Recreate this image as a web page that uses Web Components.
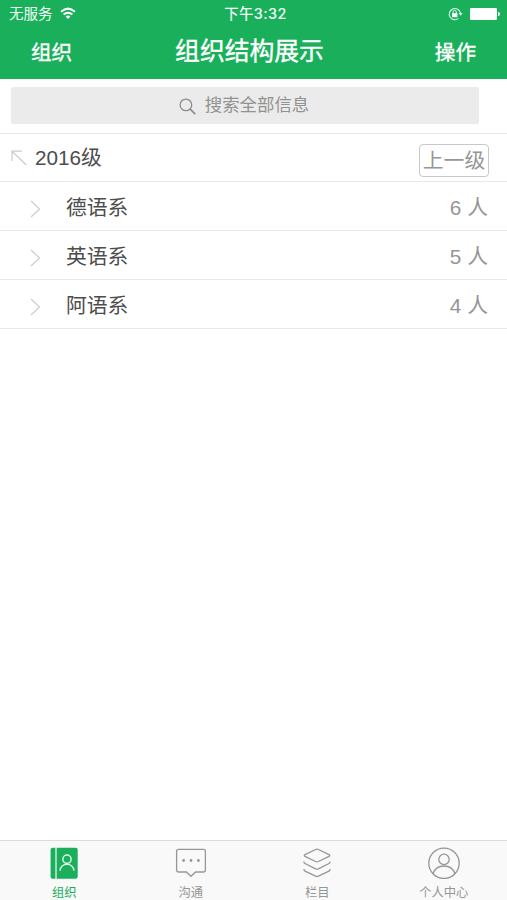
<!doctype html>
<html lang="zh-CN">
<head>
    <title>组织结构展示</title>
    <meta charset="utf-8">
    <style>
        body {
            margin: 0;
            background: #fff;
            font-family: "Liberation Sans", "Noto Sans CJK SC", sans-serif;
        }
    </style>
</head>
<body>
    <template id="screen-tpl">
        <style>
            :host {
                display: flex;
                flex-direction: column;
                height: 900px;
                width: 507px;
                overflow: hidden;
            }
            main {
                flex: 1;
            }
        </style>
        <slot name="top"></slot>
        <main><slot></slot></main>
        <slot name="bottom"></slot>
    </template>

    <template id="status-tpl">
        <style>
            :host {
                display: grid;
                grid-template-columns: 1fr auto 1fr;
                align-items: center;
                box-sizing: border-box;
                height: 27px;
                padding: 0 7px 0 9px;
                background: #19af5b;
                color: #f2fff6;
                font: 14.5px/27px Inter, "Noto Sans CJK SC", sans-serif;
            }
            .left, .right {
                display: flex;
                align-items: center;
            }
            .left {
                gap: 7px;
            }
            .right {
                justify-content: flex-end;
                gap: 7px;
            }
            .time {
                margin-left: 2px;
                font-size: 14.4px;
                font-weight: 500;
                letter-spacing: 0.4px;
            }
            svg {
                display: block;
            }
        </style>
        <span class="left">
            <slot name="carrier"></slot>
            <svg width="16" height="13" viewBox="0 0 16 13" fill="none" stroke="#fff" stroke-width="2">
                <path d="M1 4.8Q8-1.6 15 4.8M3.6 7.6Q8 3.8 12.4 7.6"/>
                <path d="M5.6 9.4Q8 7.4 10.4 9.4L8 12Z" fill="#fff" stroke="none"/>
            </svg>
        </span>
        <span class="time"><slot></slot></span>
        <span class="right">
            <svg width="15" height="14" viewBox="0 0 15 14" fill="none" stroke="#dff5e7">
                <path d="M10.5 11.4A5.6 5.6 0 1 1 12.4 6.2" stroke-width="1.1"/>
                <path d="M10.6 6h4L12.6 8.8Z" fill="#dff5e7" stroke="none"/>
                <rect x="4" y="6.2" width="5.4" height="4" fill="#fff" stroke="none"/>
                <path d="M5.1 6.5V5a1.6 1.6 0 0 1 3.2 0V6.5"/>
            </svg>
            <svg width="30" height="12" viewBox="0 0 30 12" fill="#fff">
                <rect width="27" height="12" rx="1.2"/>
                <path d="M28 4q2 0 2 2t-2 2z"/>
            </svg>
        </span>
    </template>

    <template id="nav-tpl">
        <style>
            :host {
                display: flex;
                justify-content: space-between;
                box-sizing: border-box;
                height: 52px;
                padding: 0 31px;
                background: #19af5b;
                color: #fff;
                font-size: 20.6px;
                line-height: 52px;
                -webkit-text-stroke: 0.35px #fff;
            }
            h1 {
                margin: 0 0 0 -8px;
                font-size: 24.8px;
                font-weight: 400;
                line-height: 49px;
            }
        </style>
        <slot name="left"></slot>
        <h1><slot></slot></h1>
        <slot name="right"></slot>
    </template>

    <template id="search-tpl">
        <style>
            :host {
                display: block;
                box-sizing: border-box;
                height: 54px;
                padding: 8px 28px 9px 11px;
            }
            .box {
                display: flex;
                align-items: center;
                justify-content: center;
                gap: 9px;
                height: 37px;
                padding-right: 2px;
                box-sizing: border-box;
                border-radius: 2px;
                background: #ebebeb;
                color: #929292;
                font-size: 17.4px;
                line-height: 39px;
            }
            svg {
                margin-top: 1px;
            }
        </style>
        <div class="box">
            <svg width="17" height="17" viewBox="0 0 17 17" fill="none" stroke="#8c8c8c" stroke-width="1.3">
                <circle cx="6.9" cy="6.9" r="5.8"/>
                <path d="M11.2 11.2L16.2 16.2" stroke-width="1.7"/>
            </svg>
            <slot></slot>
        </div>
    </template>

    <template id="level-tpl">
        <style>
            :host {
                display: flex;
                align-items: center;
                box-sizing: border-box;
                height: 48px;
                padding: 0 18px 0 11px;
                border-top: 1px solid #e9e9e9;
                color: #4d4d4d;
                font-size: 20.7px;
            }
            .name {
                flex: 1;
                margin-left: 8px;
                line-height: 48px;
            }
            button {
                box-sizing: border-box;
                width: 70px;
                height: 33px;
                margin-top: 5px;
                padding: 0;
                border: 1.5px solid #c8c8c8;
                border-radius: 4px;
                background: none;
                color: #969696;
                font: inherit;
                font-size: 20.8px;
                line-height: 32px;
            }
        </style>
        <svg width="16" height="16" viewBox="0 0 16 16" fill="none" stroke="#ccc" stroke-width="1.2">
            <path d="M1 11V1.2H11M1 1.2L15.4 15"/>
        </svg>
        <span class="name"><slot></slot></span>
        <button><slot name="action"></slot></button>
    </template>

    <template id="row-tpl">
        <style>
            :host {
                display: flex;
                align-items: center;
                box-sizing: border-box;
                height: 49px;
                padding: 0 19px 0 30px;
                border-top: 1px solid #e9e9e9;
                color: #4d4d4d;
                font-size: 20.8px;
                line-height: 48px;
            }
            :host(:last-of-type) {
                height: 50px;
                border-bottom: 1px solid #e9e9e9;
            }
            svg {
                margin: 5px 25px 0 0;
            }
            span {
                padding-top: 3px;
            }
            .name {
                flex: 1;
            }
            .count {
                color: #969696;
            }
        </style>
        <svg width="11" height="18" viewBox="0 0 11 18" fill="none" stroke="#ccc" stroke-width="1.2">
            <path d="M1 1L9.6 9L1 17"/>
        </svg>
        <span class="name"><slot></slot></span>
        <span class="count"><slot name="count"></slot></span>
    </template>

    <template id="tabs-tpl">
        <style>
            :host {
                display: grid;
                grid-template-columns: repeat(4, 1fr);
                box-sizing: border-box;
                height: 60px;
                padding-left: 1px;
                border-top: 1px solid #dcdcdc;
                background: #f9f9f9;
            }
        </style>
        <slot></slot>
    </template>

    <template id="tab-tpl">
        <style>
            :host {
                display: flex;
                flex-direction: column;
                align-items: center;
                padding-top: 6px;
                color: #969696;
                font-size: 12.3px;
                line-height: 18px;
            }
            :host([active]) {
                color: #19af5b;
            }
            svg {
                display: block;
                margin-bottom: 5px;
            }
        </style>
        <svg width="32" height="32" viewBox="0 0 32 32" fill="none" stroke="currentColor" stroke-width="1.3"></svg>
        <slot></slot>
    </template>

    <x-screen>
        <x-status slot="top"><span slot="carrier">无服务</span>下午3:32</x-status>
        <x-nav slot="top">
            <span slot="left">组织</span>
            组织结构展示
            <span slot="right">操作</span>
        </x-nav>

        <x-search>搜索全部信息</x-search>
        <x-level>2016级<span slot="action">上一级</span></x-level>
        <x-row>德语系<span slot="count">6 人</span></x-row>
        <x-row>英语系<span slot="count">5 人</span></x-row>
        <x-row>阿语系<span slot="count">4 人</span></x-row>

        <x-tabs slot="bottom">
            <x-tab icon="book" active>组织</x-tab>
            <x-tab icon="chat">沟通</x-tab>
            <x-tab icon="layers">栏目</x-tab>
            <x-tab icon="person">个人中心</x-tab>
        </x-tabs>
    </x-screen>

<script>
    const icons = {
        book: `
            <path d="M4.6 0.8H7.4V31.8H4.6Q2.6 31.8 2.6 29.8V2.8Q2.6 0.8 4.6 0.8Z" fill="currentColor" stroke="none"/>
            <path d="M8.6 0.8H27.5Q29.7 0.8 29.7 2.8V29.8Q29.7 31.8 27.5 31.8H8.6Z" fill="currentColor" stroke="none"/>
            <g stroke="#dcf5e6" stroke-width="1.5">
                <circle cx="19" cy="12.2" r="4.1"/>
                <path d="M12 23.6C13.2 15 24.8 15 26 23.6"/>
            </g>`,
        chat: `
            <path d="M3.6 2.3H28.4Q30.4 2.3 30.4 4.3V23Q30.4 25 28.4 25H20.6L16 29.3L11.4 25H3.6Q1.6 25 1.6 23V4.3Q1.6 2.3 3.6 2.3Z"/>
            <g fill="currentColor" stroke="none">
                <circle cx="8.6" cy="13.5" r="1.4"/>
                <circle cx="16" cy="13.5" r="1.4"/>
                <circle cx="23.4" cy="13.5" r="1.4"/>
            </g>`,
        layers: `
            <path d="M14.6 2.5Q16 1.9 17.4 2.5L28 7.6Q29.5 8.5 28 9.4L17.4 14.5Q16 15.1 14.6 14.5L4 9.4Q2.5 8.5 4 7.6Z"/>
            <path d="M3 14.4V15Q3 16 4 16.5L14.6 21.8Q16 22.4 17.4 21.8L28 16.5Q29 16 29 15V14.4"/>
            <path d="M3 22V22.6Q3 23.6 4 24.1L14.6 29.2Q16 29.8 17.4 29.2L28 24.1Q29 23.6 29 22.6V22"/>`,
        person: `
            <circle cx="16" cy="16.3" r="15.2"/>
            <circle cx="16" cy="12.4" r="5.2"/>
            <path d="M5 26.7C8.6 16.4 23.4 16.4 27 26.7"/>`
    };

    function define(name, extra) {
        customElements.define(`x-${name}`, class extends HTMLElement {
            constructor() {
                super();
                const template = document.querySelector(`#${name}-tpl`);

                this.attachShadow({ mode: 'open' });
                this.shadowRoot.appendChild(template.content.cloneNode(true));

                if (extra) {
                    extra(this);
                }
            }
        });
    }

    ['screen', 'status', 'nav', 'search', 'level', 'row', 'tabs'].forEach(name => define(name));

    define('tab', el => {
        el.shadowRoot.querySelector('svg').innerHTML = icons[el.getAttribute('icon')];
    });
</script>
</body>
</html>
